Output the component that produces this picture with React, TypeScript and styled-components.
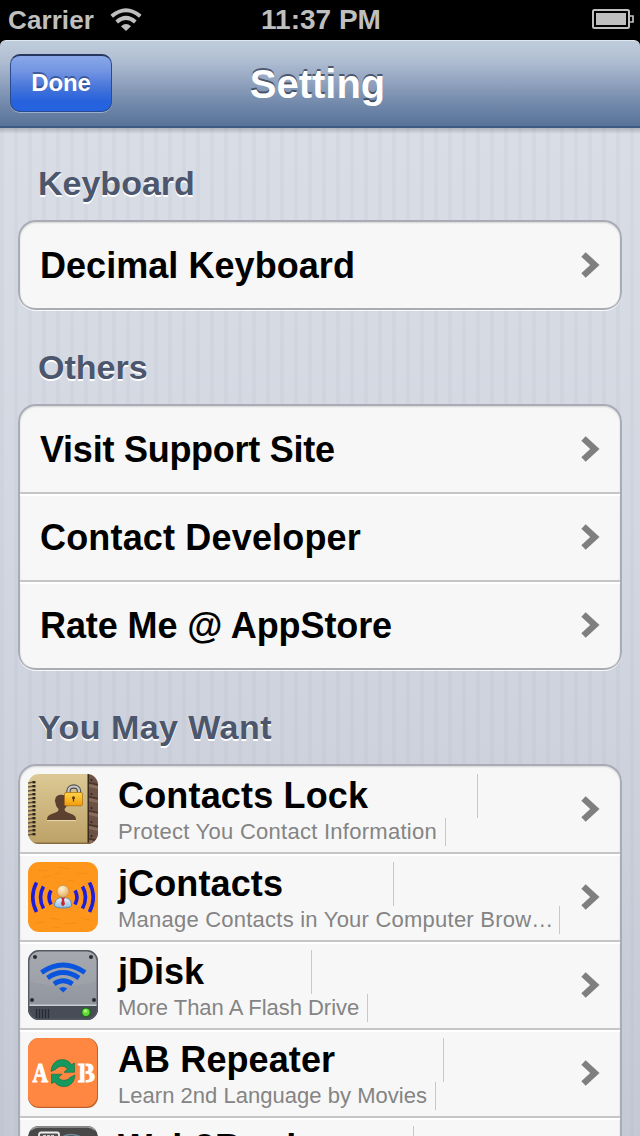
import React from "react";
import styled, { createGlobalStyle } from "styled-components";

const GlobalStyle = createGlobalStyle`
    * {
        box-sizing: border-box;
    }
    body {
        margin: 0;
        background: #000;
        font-family: "Liberation Sans", Arial, sans-serif;
    }
`

const Screen = styled.div`
width: 640px;
height: 1136px;
overflow: hidden;
display: flex;
flex-direction: column;
background: #000;
`

const StatusBar = styled.div`
height: 40px;
flex: none;
display: grid;
grid-template-columns: 1fr auto 1fr;
align-items: center;
padding: 0 6px 0 8px;
color: #bfbfbf;
font-weight: bold;
`

const Carrier = styled.div`
display: flex;
align-items: center;
gap: 16px;
font-size: 26px;
letter-spacing: 0.1px;
line-height: 40px;
`

const Time = styled.div`
font-size: 28px;
letter-spacing: 0;
line-height: 40px;
`

const Battery = styled.svg`
justify-self: end;
display: block;
margin-top: -2px;
`

const NavBar = styled.div`
height: 88px;
flex: none;
display: grid;
grid-template-columns: 102px 1fr 102px;
align-items: center;
padding: 0 15px 2px 10px;
border-radius: 6px 6px 0 0;
border-top: 1px solid #dfe7ef;
border-bottom: 2px solid #3d5a85;
background: linear-gradient(#c0cddc 0%, #afbdd2 24%, #8fa1bd 50%, #7188aa 75%, #587299 100%);
`

const DoneButton = styled.button`
height: 58px;
padding: 0;
border: 1px solid #2c4a8e;
border-top: 2px solid #25365f;
border-radius: 10px;
background: linear-gradient(#8aa7e8 0%, #7294e2 28%, #4674da 58%, #2762dc 82%, #2463df 100%);
box-shadow: 0 1px 0 rgba(190, 205, 230, 0.6);
color: #fff;
font: bold 24px "Liberation Sans", Arial, sans-serif;
letter-spacing: -0.1px;
text-shadow: 0 -2px 0 rgba(20, 40, 90, 0.5);
`

const NavTitle = styled.div`
padding-top: 2px;
text-align: center;
color: #fff;
font-size: 40px;
font-weight: bold;
line-height: 48px;
text-shadow: 0 -2px 0 rgba(40, 50, 70, 0.7);
`

const Content = styled.div`
flex: 1;
min-height: 0;
overflow: hidden;
padding: 0 18px;
background:
    linear-gradient(rgba(40, 45, 60, 0.24), rgba(40, 45, 60, 0) 6px),
    repeating-linear-gradient(90deg, rgba(150, 163, 190, 0.09) 0 4px, transparent 4px 14px),
    linear-gradient(#d9dde5, #d3d7e1 40%, #c4c9d5);
`

const SectionTitle = styled.div<{ $first?: boolean; $spacing?: string }>`
height: ${(p) => (p.$first ? 92 : 94)}px;
padding: ${(p) => (p.$first ? 35 : 37)}px 20px 0;
color: #4c566c;
font-size: 34px;
font-weight: bold;
line-height: 40px;
letter-spacing: ${(p) => p.$spacing || "0"};
text-shadow: 0 2px 0 #fff;
`

const Group = styled.div`
border: 2px solid #a9acb4;
border-bottom: 0;
border-radius: 18px;
background: #f7f7f7;
overflow: hidden;
box-shadow: 0 1px 0 rgba(255, 255, 255, 0.85), inset 0 1px 2px rgba(0, 0, 0, 0.14);
`

const Row = styled.div`
height: 88px;
display: flex;
align-items: flex-start;
padding: 0 20px;
border-bottom: 2px solid #c6c6c6;
& + & {
    box-shadow: inset 0 2px 0 #fff;
}
&:last-child {
    border-bottom-color: #a9acb4;
    border-radius: 0 0 16px 16px;
}
`

const AppRow = styled(Row)`
padding-left: 8px;
`

const RowLabel = styled.div<{ $spacing?: string }>`
flex: 1;
font-size: 36px;
font-weight: bold;
line-height: 88px;
letter-spacing: ${(p) => p.$spacing || "0"};
white-space: nowrap;
`

const Chevron = styled.svg`
flex: none;
display: block;
margin-top: 29px;
`

const AppIcon = styled.svg`
flex: none;
display: block;
margin: 8px 20px 0 0;
`

const AppText = styled.div`
flex: 1;
min-width: 0;
padding-top: 8px;
`

const AppName = styled.div<{ $width: number; $spacing?: string }>`
width: ${(p) => p.$width}px;
height: 44px;
border-right: 1px solid #c8c8c8;
font-size: 36px;
font-weight: bold;
line-height: 44px;
letter-spacing: ${(p) => p.$spacing || "0"};
white-space: nowrap;
`

const AppInfo = styled.div<{ $width: number; $spacing?: string }>`
width: ${(p) => p.$width}px;
height: 28px;
border-right: 1px solid #c8c8c8;
color: #848484;
font-size: 22px;
line-height: 27px;
letter-spacing: ${(p) => p.$spacing || "0"};
white-space: nowrap;
`

const Arrow = () => (
    <Chevron width="19" height="28" viewBox="0 0 19 28">
        <path d="M2.500 3.500 L13.800 14 L2.500 24.500" fill="none" stroke="#7f7f7f" strokeWidth="6.400" />
    </Chevron>
)

const ContactsLockIcon = () => (
    <AppIcon width="70" height="70" viewBox="0 0 70 70">
        <defs>
            <linearGradient id="cover" x1="0" y1="0" x2="0" y2="1">
                <stop offset="0" stopColor="#dcc995" />
                <stop offset="1" stopColor="#bda167" />
            </linearGradient>
            <linearGradient id="lock" x1="0" y1="0" x2="0" y2="1">
                <stop offset="0" stopColor="#ffd54a" />
                <stop offset="1" stopColor="#f29a08" />
            </linearGradient>
            <clipPath id="round"><rect width="70" height="70" rx="11" /></clipPath>
        </defs>
        <g clipPath="url(#round)">
            <rect width="70" height="70" fill="url(#cover)" />
            <rect x="60" width="10" height="70" fill="#6d5144" />
            <rect x="59.500" width="1.500" height="70" fill="#392a20" />
            {[0, 1, 2, 3, 4].map((n) => (
                <g key={n}>
                    <path d={`M61 ${8 + n * 14}l9 2v1.500l-9-2z`} fill="#453229" />
                    <path d={`M61 ${10 + n * 14}l9 2v3l-9-2z`} fill="#8a6c5c" />
                    <circle cx="63.500" cy={6 + n * 14} r="1" fill="#32231c" />
                </g>
            ))}
            {Array.from({ length: 14 }, (_, n) => (
                <g key={n}>
                    <path d={`M0 ${9 + n * 4}L6.500 ${8 + n * 4}`} stroke="#5f5645" strokeWidth="1.700" />
                    <rect x="4.500" y={7 + n * 4} width="3" height="2.400" fill="#2d2820" />
                </g>
            ))}
            <path d="M0 69.300H70" stroke="#876b3f" strokeWidth="1.500" />
        </g>
        <path d="M19 46c0-4 2-5 6-6.500 4-1.500 5.500-2 5.500-4.500-2-2-3-4-3-6.500-1-1.500-.5-2.500 0-4 .5-5 11-5 12 0 .5 2 .5 3 0 4 0 2.500-1 4.500-3 6.500 0 2.500 2 3.200 5.500 4.500 4 1.500 6 2.500 6 6.500z" fill="#5c4030" />
        <path d="M19 46.600h29" stroke="#ead9ac" strokeWidth="1" />
        <path d="M40.500 20v-3c0-6 10.500-6 10.500 0v3" fill="none" stroke="#4d4d4d" strokeWidth="4.400" />
        <path d="M40.500 20v-3c0-6 10.500-6 10.500 0v3" fill="none" stroke="#c9c9c9" strokeWidth="2.200" />
        <rect x="36.500" y="18.500" width="18" height="13.300" rx="1.500" fill="url(#lock)" stroke="#a86b0a" strokeWidth=".7" />
        <path d="M45.500 23.500v4" stroke="#5c3800" strokeWidth="1.200" />
        <circle cx="45.500" cy="23.800" r="1.500" fill="#5c3800" />
    </AppIcon>
)

const JContactsIcon = () => (
    <AppIcon width="70" height="70" viewBox="0 0 70 70">
        <defs>
            <radialGradient id="head" cx=".4" cy=".3" r=".7">
                <stop offset="0" stopColor="#fff3d2" />
                <stop offset="1" stopColor="#e5ae61" />
            </radialGradient>
            <linearGradient id="shirt" x1="0" y1="0" x2="0" y2="1">
                <stop offset="0" stopColor="#eef6fc" />
                <stop offset="1" stopColor="#8bbbe2" />
            </linearGradient>
        </defs>
        <rect width="70" height="70" rx="11" fill="#ff961c" />
        <g stroke="#e87f0b" strokeWidth="1" opacity=".45" fill="none">
            <path d="M10 8l9 1M30 5l12 2M49 12l10-1M14 16l8-2M39 18l7 1M7 61l10-1M22 56l9 2M37 62l12-1M53 56l9 2M25 66l8-1M58 20l6 1M27 12l5-1" />
        </g>
        <g fill="none" stroke="#1c1edb" strokeWidth="3.600">
            <path d="M8.500 20.500Q1 35 8.500 50" />
            <path d="M15.500 24.500Q9.500 35 15.500 46.500" />
            <path d="M23 28.500Q19 35 23 42.500" />
            <path d="M61.500 20.500Q69 35 61.500 50" />
            <path d="M54.500 24.500Q60.500 35 54.500 46.500" />
            <path d="M47 28.500Q51 35 47 42.500" />
        </g>
        <path d="M26.500 44c0-6 3-8.500 8.500-8.500s8.500 2.500 8.500 8.500c-3 2.700-14 2.700-17 0z" fill="url(#shirt)" stroke="#5286b4" strokeWidth=".9" />
        <path d="M33 35.500h4l-1 2.500 1 4-2 2.500-2-2.500 1-4z" fill="#cc2730" />
        <circle cx="35" cy="29.300" r="6" fill="url(#head)" stroke="#bc8444" strokeWidth=".6" />
    </AppIcon>
)

const JDiskIcon = () => (
    <AppIcon width="70" height="70" viewBox="0 0 70 70">
        <defs>
            <linearGradient id="disk" x1="0" y1="0" x2="0" y2="1">
                <stop offset="0" stopColor="#a1a4aa" />
                <stop offset=".6" stopColor="#969aa2" />
                <stop offset="1" stopColor="#8c9099" />
            </linearGradient>
            <clipPath id="diskClip"><rect width="70" height="70" rx="11" /></clipPath>
        </defs>
        <g clipPath="url(#diskClip)">
            <rect width="70" height="70" fill="url(#disk)" />
            <path d="M0 0H70V31Q35 41 0 31z" fill="#fff" opacity=".06" />
            <path d="M0 55.500H70V70H0z" fill="#474c57" />
            <path d="M0 55.300H70" stroke="#cacdd2" strokeWidth="1.600" />
            <path d="M8.500 59v10M11.500 59v10M14.500 59v10M17.500 59v10M20.500 59v10" stroke="#252a34" strokeWidth="1.300" />
        </g>
        <rect x=".7" y=".7" width="68.600" height="68.600" rx="10.500" fill="none" stroke="#555961" strokeWidth="1.400" />
        <g fill="#292c32">
            <circle cx="7" cy="7" r="2" />
            <circle cx="63" cy="7" r="2" />
            <circle cx="4" cy="50" r="2" />
            <circle cx="66" cy="50" r="2" />
        </g>
        <g fill="none" stroke="#0b55de" strokeWidth="4.800">
            <path d="M13.500 22.500Q35 7.500 57 22.500" />
            <path d="M19.500 28Q35 17 51 28" />
            <path d="M26 34Q35 27.500 44.500 34" />
        </g>
        <path d="M31 38.500Q35 35.500 39.300 38.500L35.200 42.500z" fill="#0b55de" />
        <circle cx="58" cy="62.300" r="4.300" fill="#5fdc33" stroke="#1b661b" strokeWidth="1.200" />
        <circle cx="57.500" cy="61" r="1.800" fill="#a5f77b" />
    </AppIcon>
)

const Letter = styled.text`
fill: #fff;
stroke: #fff;
stroke-width: 0.9px;
font-family: "Liberation Serif", serif;
font-weight: bold;
font-size: 27px;
`

const RepeaterIcon = () => (
    <AppIcon width="70" height="70" viewBox="0 0 70 70">
        <rect width="70" height="70" rx="11" fill="#bd602b" />
        <rect width="69" height="68.800" rx="11" fill="#ff8742" />
        <Letter x="4.500" y="43.800" textLength="15.500" lengthAdjust="spacingAndGlyphs">A</Letter>
        <Letter x="50" y="43.800" textLength="17" lengthAdjust="spacingAndGlyphs">B</Letter>
        <path d="M57 24v22" stroke="#ff8742" strokeWidth="1" />
        <g fill="#15995f" stroke="#0b6b40" strokeWidth=".6">
            <path d="M23 33.500C24 20 38 18.500 43.500 26.500L46.500 25V34.300H36L39.500 31C36 26.500 30 28 27.500 31.500z" />
            <path d="M47 37C46 50.500 32 51.500 26.500 44L23.500 45.500V36.200H34L30.500 39.500C34 44 40 42.500 42.500 39z" />
        </g>
    </AppIcon>
)

const BookIcon = () => (
    <AppIcon width="70" height="70" viewBox="0 0 70 70">
        <rect width="70" height="70" rx="11" fill="#484848" />
        <path d="M3 4Q6 1 11 1H59Q64 1 67 4" fill="none" stroke="#999" strokeWidth="1.500" />
        <rect x="11" y="6.500" width="20" height="24" rx="2" fill="#525252" stroke="#ededed" strokeWidth="1.800" />
        <path d="M15 10h12" stroke="#ccc" strokeWidth="2" strokeDasharray="3 1" />
        <path d="M33 12Q42 5 55 12" fill="none" stroke="#6a8a98" strokeWidth="1.600" />
        <path d="M36 13Q44 9 52 13" fill="none" stroke="#a7a76c" strokeWidth="1" />
    </AppIcon>
)

const others = [
    { label: "Visit Support Site", spacing: "-0.25px" },
    { label: "Contact Developer", spacing: "0.17px" },
    { label: "Rate Me @ AppStore", spacing: "-0.1px" },
]

const apps = [
    { name: "Contacts Lock", info: "Protect You Contact Information", nameWidth: 360, nameSpacing: "0.17px", infoWidth: 328, infoSpacing: "0.27px", Icon: ContactsLockIcon },
    { name: "jContacts", info: "Manage Contacts in Your Computer Brow…", nameWidth: 276, nameSpacing: "0.12px", infoWidth: 442, infoSpacing: "0.23px", Icon: JContactsIcon },
    { name: "jDisk", info: "More Than A Flash Drive", nameWidth: 194, nameSpacing: "0", infoWidth: 250, infoSpacing: "-0.02px", Icon: JDiskIcon },
    { name: "AB Repeater", info: "Learn 2nd Language by Movies", nameWidth: 326, nameSpacing: "0.1px", infoWidth: 318, infoSpacing: "0.03px", Icon: RepeaterIcon },
    { name: "Web2Book", info: "", nameWidth: 296, nameSpacing: "0.4px", infoWidth: 300, infoSpacing: "0", Icon: BookIcon },
]

export default function App(){
    return (
        <Screen>
            <GlobalStyle />
            <StatusBar>
                <Carrier>
                    Carrier
                    <svg width="32" height="24" viewBox="0 0 32 24">
                        <g fill="none" stroke="#bfbfbf" strokeWidth="4">
                            <path d="M1.700 8.300Q16 -3.700 30.300 8.300" />
                            <path d="M6.700 13.900Q16 5.900 25.300 13.900" />
                        </g>
                        <path d="M11 18.200Q16 13.700 21 18.200L16 23z" fill="#bfbfbf" />
                    </svg>
                </Carrier>
                <Time>11:37 PM</Time>
                <Battery width="42" height="20" viewBox="0 0 42 20">
                    <rect x="1" y="1" width="36" height="18" rx="1.500" fill="none" stroke="#bfbfbf" strokeWidth="2" />
                    <rect x="4" y="4" width="30" height="12" fill="#bfbfbf" />
                    <path d="M38 7h3v6h-3" fill="none" stroke="#bfbfbf" strokeWidth="1.700" />
                </Battery>
            </StatusBar>
            <NavBar>
                <DoneButton>Done</DoneButton>
                <NavTitle>Setting</NavTitle>
            </NavBar>
            <Content>
                <SectionTitle $first>Keyboard</SectionTitle>
                <Group>
                    <Row>
                        <RowLabel $spacing="0.05px">Decimal Keyboard</RowLabel>
                        <Arrow />
                    </Row>
                </Group>
                <SectionTitle>Others</SectionTitle>
                <Group>
                    {others.map((e) => (
                        <Row key={e.label}>
                            <RowLabel $spacing={e.spacing}>{e.label}</RowLabel>
                            <Arrow />
                        </Row>
                    ))}
                </Group>
                <SectionTitle $spacing="0.45px">You May Want</SectionTitle>
                <Group>
                    {apps.map(({ name, info, nameWidth, nameSpacing, infoWidth, infoSpacing, Icon }) => (
                        <AppRow key={name}>
                            <Icon />
                            <AppText>
                                <AppName $width={nameWidth} $spacing={nameSpacing}>{name}</AppName>
                                <AppInfo $width={infoWidth} $spacing={infoSpacing}>{info}</AppInfo>
                            </AppText>
                            <Arrow />
                        </AppRow>
                    ))}
                </Group>
            </Content>
        </Screen>
    );
};
